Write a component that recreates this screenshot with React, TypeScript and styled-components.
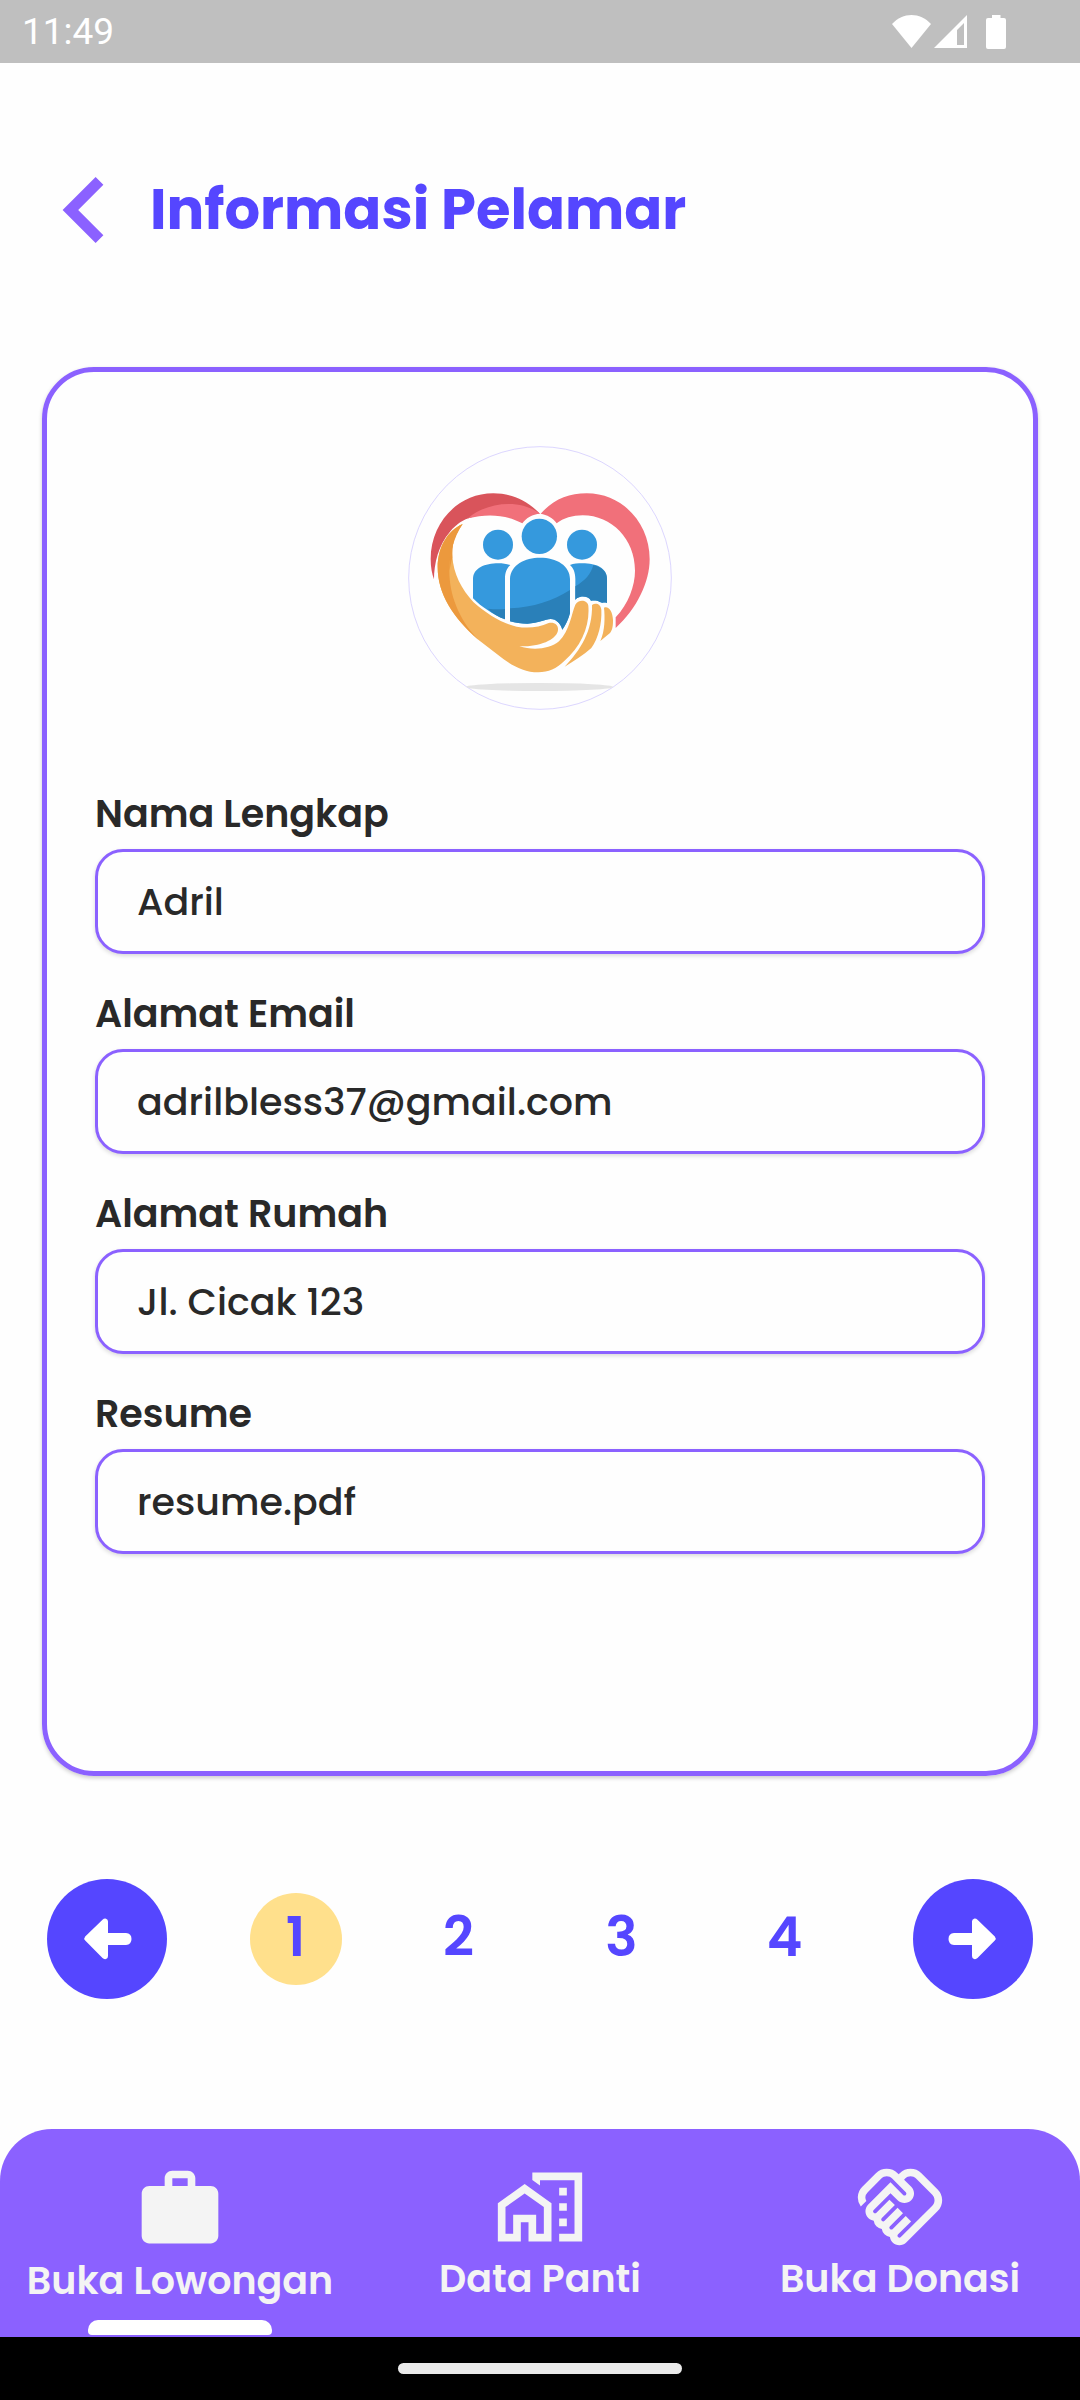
import React from "react";
import styled, { createGlobalStyle } from "styled-components";
import { MdWork, MdOutlineHomeWork, MdOutlineHandshake } from "react-icons/md";

const violet = "#8b61ff";
const indigo = "#5546ff";
const ink = "#292929";

const GlobalStyle = createGlobalStyle`
  *, *::before, *::after { box-sizing: border-box; }
  body {
    margin: 0;
    background: #fefefe;
    color: ${ink};
    font-family: Poppins, Inter, "Noto Sans", sans-serif;
  }
  button, input { font: inherit; color: inherit; }
`;

const Screen = styled.div`
  min-height: 100vh;
  display: flex;
  flex-direction: column;
`;

const StatusBar = styled.div`
  height: 63px;
  padding: 0 72px 0 22px;
  display: flex;
  align-items: center;
  justify-content: space-between;
  background: #bfbfbf;
  color: #fff;
  font: 400 37px/1 Roboto, sans-serif;
`;

const StatusIcons = styled.div`
  display: flex;
  align-items: center;
`;

const Header = styled.header`
  display: flex;
  align-items: center;
  gap: 46px;
  padding: 113px 62px 123px;
`;

const BackButton = styled.button`
  display: flex;
  padding: 0;
  border: 0;
  background: none;
  color: ${violet};
  cursor: pointer;
`;

const Title = styled.h1`
  margin: 0;
  color: ${indigo};
  font-size: 56px;
  line-height: 68px;
  font-weight: 700;
`;

const Card = styled.form`
  margin: 0 42px;
  padding: 74px 48px 217px;
  display: flex;
  flex-direction: column;
  align-items: center;
  border: 5px solid ${violet};
  border-radius: 52px;
  box-shadow: 0 2px 4px rgba(0, 0, 0, 0.2);
`;

const Fields = styled.div`
  width: 100%;
  margin-top: 78px;
  display: grid;
  gap: 34px;
`;

const Field = styled.div`
  display: flex;
  flex-direction: column;
  gap: 9px;
`;

const Label = styled.label`
  font-size: 38px;
  line-height: 52px;
  font-weight: 600;
`;

const TextBox = styled.input`
  width: 100%;
  height: 105px;
  padding: 0 39px;
  border: 3px solid ${violet};
  border-radius: 28px;
  outline: none;
  background: #fefefe;
  box-shadow: 0 2px 4px rgba(0, 0, 0, 0.15);
  font-size: 38px;
  font-weight: 500;
`;

const Pager = styled.nav`
  margin: 103px 47px 130px;
  display: grid;
  grid-template-columns: 120px 1fr 120px;
  align-items: center;
  gap: 47px;
`;

const ArrowButton = styled.button`
  width: 120px;
  height: 120px;
  padding: 0;
  display: flex;
  border: 0;
  border-radius: 50%;
  background: ${indigo};
  cursor: pointer;
`;

const Pages = styled.div`
  display: grid;
  grid-template-columns: repeat(4, 1fr);
  justify-items: center;
`;

const PageButton = styled.button<{ $current?: boolean }>`
  width: 92px;
  height: 92px;
  padding: 0 0 4px;
  border: 0;
  border-radius: 50%;
  background: ${(p) => (p.$current ? "#ffe08c" : "transparent")};
  color: ${indigo};
  font-size: 54px;
  line-height: 64px;
  font-weight: 600;
  cursor: pointer;
`;

const TabBar = styled.nav`
  height: 208px;
  margin-top: auto;
  display: grid;
  grid-template-columns: repeat(3, 1fr);
  border-radius: 52px 52px 0 0;
  background: ${violet};
`;

const Tab = styled.a<{ $active?: boolean }>`
  padding: ${(p) => (p.$active ? "34px" : "32px")} 0 2px;
  display: flex;
  flex-direction: column;
  align-items: center;
  color: #f4f4f4;
  font-size: 38px;
  line-height: 52px;
  font-weight: 600;
  text-decoration: none;
  white-space: nowrap;
`;

const ActiveMark = styled.span`
  width: 184px;
  height: 15px;
  margin-top: auto;
  border-radius: 10px 10px 4px 4px;
  background: #fff;
`;

const GestureBar = styled.div`
  height: 63px;
  display: flex;
  align-items: center;
  justify-content: center;
  background: #000;
`;

const GesturePill = styled.div`
  width: 284px;
  height: 11px;
  border-radius: 6px;
  background: #eaeaea;
`;

const SystemIcons = () => (
  <svg width="116" height="34" viewBox="0 0 116 34" fill="#fff" aria-hidden="true">
    <path d="M0 9C11-3 28-3 39 9L19.500 33Z" />
    <path fillRule="evenodd" d="M42 33L75 0V33ZM65 30H72V8L65 15Z" />
    <path d="M100 0H108.500V3H112Q114 3 114 5V32Q114 34 112 34H96Q94 34 94 32V5Q94 3 96 3H100Z" />
  </svg>
);

const Chevron = () => (
  <svg width="42" height="66" viewBox="8 6 7.410 12" fill="currentColor" aria-hidden="true">
    <path d="M15.410 7.410L14 6l-6 6 6 6 1.410-1.410L10.830 12z" />
  </svg>
);

const Arrow = ({ right = false }: { right?: boolean }) => (
  <svg width="120" height="120" viewBox="0 0 120 120" fill="#fff" aria-hidden="true">
    <path
      transform={right ? "matrix(-1 0 0 1 120 0)" : undefined}
      d="M38.200 57.500L55.500 40.800Q57 39.300 59 39.700Q61 40.300 61 42.500V54H79Q84.500 54.500 84.500 60T79 66H61V77Q61 79.400 59 80Q57 80.500 55.500 79L38.200 61.500Q36.400 59.500 38.200 57.500Z"
    />
  </svg>
);

const Logo = () => (
  <svg width="264" height="264" viewBox="54 46 792 792" role="img" aria-label="Logo panti">
    <defs>
      <clipPath id="avatar-clip">
        <circle cx="450" cy="442" r="394" />
      </clipPath>
    </defs>
    <circle cx="450" cy="442" r="394" fill="#fefefe" stroke="#dcd6ff" strokeWidth="3" />
    <ellipse cx="448" cy="769" rx="222" ry="12" fill="#e5e5e5" clipPath="url(#avatar-clip)" />
    <path fill="#f1707a" d="M452 249C490 207 535 188 590 188C700 188 779 280 779 385C779 455 740 535 677 592V560C715 520 735 465 735 420C735 325 665 254 578 254C548 254 520 262 500 278C490 262 470 252 452 249Z" />
    <path fill="#d9545b" d="M450 249C410 209 365 188 310 188C200 188 122 280 122 385C122 410 126 430 132 446C132 400 145 343 180 303C200 280 220 266 245 260L340 225Z" />
    <path fill="#f1707a" d="M234 263C280 222 350 212 400 225C420 231 438 240 450 249C428 250 408 262 397 278C350 252 292 248 234 263Z" />
    <g fill="#3599dd">
      <circle cx="324" cy="342" r="45" />
      <circle cx="448" cy="317" r="53" />
      <circle cx="576" cy="342" r="45" />
      <path d="M249 445C249 412 285 398 325 398C338 398 350 400 361 403C350 414 345 425 345 445V566C310 552 275 530 249 503Z" />
      <path d="M360 445C362 402 405 381 450 381C500 381 540 405 540 445V547C535 565 528 582 517 597C512 580 500 565 482 565C465 565 445 578 412 579C395 579 375 577 360 572Z" />
      <path d="M540 403C550 399 565 398 577 398C620 398 651 412 651 445V517C643 514 636 518 630 514C620 508 610 510 603 510C598 500 585 496 572 498C562 500 557 505 556 508V445C556 425 550 412 540 403Z" />
    </g>
    <g fill="#2a80b9">
      <path d="M293 534C312 536 330 536 345 535V566C325 560 307 548 293 534Z" />
      <path d="M360 533C430 530 490 510 540 478V547C535 565 528 582 517 597C512 580 500 565 482 565C465 565 445 578 412 579C395 579 375 577 360 572Z" />
      <path d="M610 403C638 411 651 425 651 445V517C643 514 636 518 630 514C620 508 610 510 603 510C598 500 585 496 572 498C562 500 557 505 556 508V467C585 450 603 430 610 403Z" />
    </g>
    <path fill="#f3b25b" d="M218 280C190 315 186 345 187 375C190 430 215 475 250 514C290 550 340 580 380 588C415 594 447 590 476 577C496 573 508 586 503 603C495 628 450 648 388 647C430 660 480 655 507 632C540 598 544 550 556 522C565 505 592 507 595 525C600 585 575 645 522 692C500 714 475 725 445 725C405 725 372 708 340 685L262 625C190 562 143 490 143 410C143 350 172 300 218 280Z" />
    <path fill="#ec993d" d="M218 280C172 300 143 350 143 410C143 490 190 562 266 628C205 565 178 490 178 420C178 375 190 320 218 280Z" />
    <path fill="#ec993d" d="M218 280C190 315 186 345 187 380L178 420C178 360 190 320 218 280Z" />
    <path fill="#f3b25b" d="M606 523C617 515 632 520 634 537C636 580 625 622 604 652C580 674 550 692 524 708C572 658 608 600 606 523Z" />
    <path fill="#f3b25b" d="M642 531C655 525 668 540 669 568C669 585 668 597 660 607L631 631C645 600 645 560 642 531Z" />
  </svg>
);

const fields = [
  { id: "nama", label: "Nama Lengkap", value: "Adril", type: "text" },
  { id: "email", label: "Alamat Email", value: "adrilbless37@gmail.com", type: "email" },
  { id: "alamat", label: "Alamat Rumah", value: "Jl. Cicak 123", type: "text" },
  { id: "resume", label: "Resume", value: "resume.pdf", type: "text" },
];

export default function App() {
  return (
    <Screen>
      <GlobalStyle />
      <StatusBar>
        <span>11:49</span>
        <StatusIcons>
          <SystemIcons />
        </StatusIcons>
      </StatusBar>
      <Header>
        <BackButton type="button" aria-label="Kembali">
          <Chevron />
        </BackButton>
        <Title>Informasi Pelamar</Title>
      </Header>
      <Card>
        <Logo />
        <Fields>
          {fields.map((f) => (
            <Field key={f.id}>
              <Label htmlFor={f.id}>{f.label}</Label>
              <TextBox id={f.id} type={f.type} defaultValue={f.value} readOnly />
            </Field>
          ))}
        </Fields>
      </Card>
      <Pager aria-label="Halaman">
        <ArrowButton type="button" aria-label="Sebelumnya">
          <Arrow />
        </ArrowButton>
        <Pages>
          {[1, 2, 3, 4].map((n) => (
            <PageButton key={n} type="button" $current={n === 1}>
              {n}
            </PageButton>
          ))}
        </Pages>
        <ArrowButton type="button" aria-label="Berikutnya">
          <Arrow right />
        </ArrowButton>
      </Pager>
      <TabBar aria-label="Menu utama">
        <Tab href="#lowongan" $active>
          <MdWork size={92} />
          Buka Lowongan
          <ActiveMark />
        </Tab>
        <Tab href="#panti">
          <MdOutlineHomeWork size={92} />
          Data Panti
        </Tab>
        <Tab href="#donasi">
          <MdOutlineHandshake size={92} />
          Buka Donasi
        </Tab>
      </TabBar>
      <GestureBar>
        <GesturePill />
      </GestureBar>
    </Screen>
  );
}
